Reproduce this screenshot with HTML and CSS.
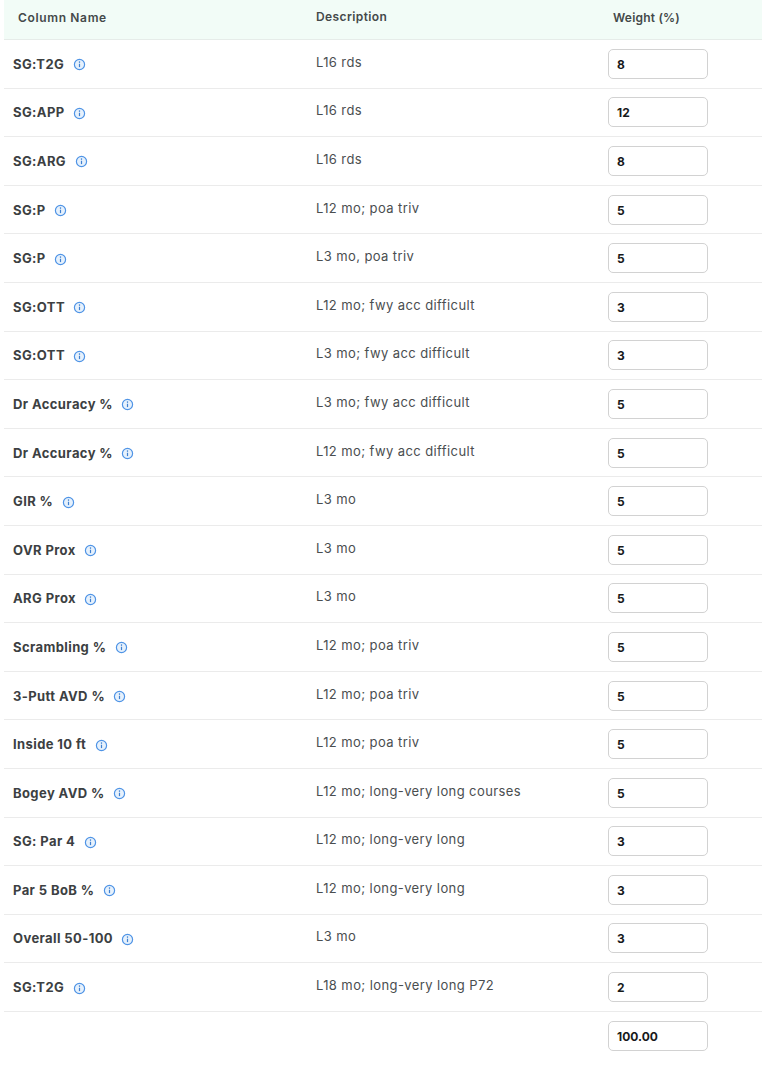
FILE: index.html
```html
<!DOCTYPE html>
<html lang="en">
<head>
<meta charset="utf-8">
<title>Weights</title>
<link rel="stylesheet" href="styles.css">
</head>
<body>
<svg class="defs" width="0" height="0" aria-hidden="true"><symbol id="info" viewBox="0 0 12 12"><circle cx="6" cy="6" r="4.7" fill="#e6f1fc" stroke="#4f94e6" stroke-width="1.1"/><path d="M6 5.3v3.1" stroke="#3f80d0" stroke-width="1.1" fill="none"/><circle cx="6" cy="3.8" r=".7" fill="#3f80d0"/></symbol></svg>
<table class="weights">
<thead><tr><th class="col-name">Column Name</th><th class="col-desc">Description</th><th class="col-weight">Weight (%)</th></tr></thead>
<tbody>
<tr><td class="name">SG:T2G <svg class="info"><use href="#info"/></svg></td><td class="desc">L16 rds</td><td><div class="field">8</div></td></tr>
<tr><td class="name">SG:APP <svg class="info"><use href="#info"/></svg></td><td class="desc">L16 rds</td><td><div class="field">12</div></td></tr>
<tr><td class="name">SG:ARG <svg class="info"><use href="#info"/></svg></td><td class="desc">L16 rds</td><td><div class="field">8</div></td></tr>
<tr><td class="name">SG:P <svg class="info"><use href="#info"/></svg></td><td class="desc">L12 mo; poa triv</td><td><div class="field">5</div></td></tr>
<tr><td class="name">SG:P <svg class="info"><use href="#info"/></svg></td><td class="desc">L3 mo, poa triv</td><td><div class="field">5</div></td></tr>
<tr><td class="name">SG:OTT <svg class="info"><use href="#info"/></svg></td><td class="desc">L12 mo; fwy acc difficult</td><td><div class="field">3</div></td></tr>
<tr><td class="name">SG:OTT <svg class="info"><use href="#info"/></svg></td><td class="desc">L3 mo; fwy acc difficult</td><td><div class="field">3</div></td></tr>
<tr><td class="name">Dr Accuracy % <svg class="info"><use href="#info"/></svg></td><td class="desc">L3 mo; fwy acc difficult</td><td><div class="field">5</div></td></tr>
<tr><td class="name">Dr Accuracy % <svg class="info"><use href="#info"/></svg></td><td class="desc">L12 mo; fwy acc difficult</td><td><div class="field">5</div></td></tr>
<tr><td class="name">GIR % <svg class="info"><use href="#info"/></svg></td><td class="desc">L3 mo</td><td><div class="field">5</div></td></tr>
<tr><td class="name">OVR Prox <svg class="info"><use href="#info"/></svg></td><td class="desc">L3 mo</td><td><div class="field">5</div></td></tr>
<tr><td class="name">ARG Prox <svg class="info"><use href="#info"/></svg></td><td class="desc">L3 mo</td><td><div class="field">5</div></td></tr>
<tr><td class="name">Scrambling % <svg class="info"><use href="#info"/></svg></td><td class="desc">L12 mo; poa triv</td><td><div class="field">5</div></td></tr>
<tr><td class="name">3-Putt AVD % <svg class="info"><use href="#info"/></svg></td><td class="desc">L12 mo; poa triv</td><td><div class="field">5</div></td></tr>
<tr><td class="name">Inside 10 ft <svg class="info"><use href="#info"/></svg></td><td class="desc">L12 mo; poa triv</td><td><div class="field">5</div></td></tr>
<tr><td class="name">Bogey AVD % <svg class="info"><use href="#info"/></svg></td><td class="desc">L12 mo; long-very long courses</td><td><div class="field">5</div></td></tr>
<tr><td class="name">SG: Par 4 <svg class="info"><use href="#info"/></svg></td><td class="desc">L12 mo; long-very long</td><td><div class="field">3</div></td></tr>
<tr><td class="name">Par 5 BoB % <svg class="info"><use href="#info"/></svg></td><td class="desc">L12 mo; long-very long</td><td><div class="field">3</div></td></tr>
<tr><td class="name">Overall 50-100 <svg class="info"><use href="#info"/></svg></td><td class="desc">L3 mo</td><td><div class="field">3</div></td></tr>
<tr><td class="name">SG:T2G <svg class="info"><use href="#info"/></svg></td><td class="desc">L18 mo; long-very long P72</td><td><div class="field">2</div></td></tr>
<tr class="total"><td></td><td></td><td><div class="field">100.00</div></td></tr>
</tbody>
</table>
</body>
</html>
```
FILE: styles.css
```css
html, body { margin: 0; background: #fff; }
body { font-family: Inter, "Open Sans", "Liberation Sans", sans-serif; color: #3d4244; padding-left: 4px; }
.defs { position: absolute; }
.weights { width: 758px; table-layout: fixed; border-collapse: collapse; border-spacing: 0; }
.weights thead tr { height: 39.5px; background: #f2fcf7; border-bottom: 1px solid #e6ece9; }
.weights th { box-sizing: border-box; font-size: 12px; font-weight: 600; letter-spacing: .2px; text-align: left; padding: 0 0 4px; color: #44494a; }
.weights .col-name { width: 312px; padding-left: 14px; letter-spacing: .65px; }
.weights .col-desc { width: 292px; padding-bottom: 6px; letter-spacing: .4px; }
.weights .col-weight { padding-left: 5px; }
.weights tbody tr { height: 48.6px; border-bottom: 1px solid #ebebeb; }
.weights tbody tr.total { border-bottom: 0; }
.weights td { padding: 0; vertical-align: middle; }
.weights .name { font-size: 13px; font-weight: 700; letter-spacing: .4px; padding-left: 9px; color: #3c4042; }
.weights .desc { font-size: 13px; font-weight: 400; letter-spacing: .4px; color: #4a4e50; padding-bottom: 4px; }
.info { width: 13px; height: 13px; margin-left: 5px; vertical-align: -2.5px; }
.field { box-sizing: border-box; width: 100px; height: 30px; border: 1px solid #d2d2d2; border-radius: 5px; background: #fff; padding-left: 8px; font-size: 12px; font-weight: 700; line-height: 29px; color: #17191a; }
```
